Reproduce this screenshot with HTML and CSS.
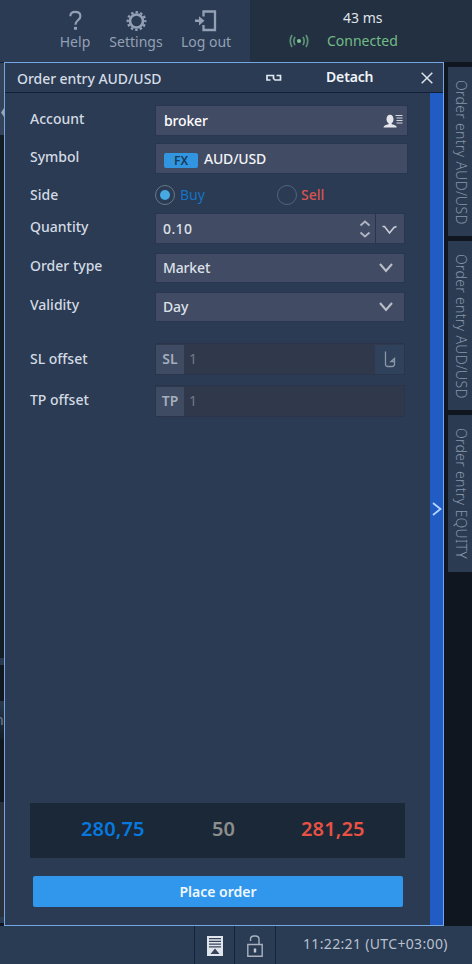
FILE: index.html
```html
<!DOCTYPE html>
<html lang="en">
<head>
<meta charset="utf-8">
<title>Order entry AUD/USD</title>
<link rel="stylesheet" href="styles.css">
</head>
<body>
<header class="topbar">
  <nav class="menu">
    <a class="menu-item help"><svg width="16" height="22" viewBox="0 0 16 22"><path d="M2.500 5.800C2.500 2.600 4.600 1.300 7.600 1.300s5.600 1.500 5.600 4.500c0 4.500-5.300 4.400-5.300 9.200" fill="none" stroke="currentColor" stroke-width="2.300"/><rect x="6.400" y="17.300" width="3.200" height="3" fill="currentColor"/></svg><span>Help</span></a>
    <a class="menu-item settings"><svg width="22" height="22" viewBox="-11 -11 22 22"><circle r="6.800" fill="none" stroke="currentColor" stroke-width="2.800"/><circle r="9.200" fill="none" stroke="currentColor" stroke-width="2.400" stroke-dasharray="2.600 2.217" stroke-dashoffset="1.300"/></svg><span>Settings</span></a>
    <a class="menu-item logout"><svg width="22" height="22" viewBox="0 0 22 22"><path d="M8.500 6.500V1.500H20V20H8.500V15" fill="none" stroke="currentColor" stroke-width="2.300"/><path d="M0 9.600h4V6.200l5.500 4.600L4 15.400V12H0z" fill="currentColor"/></svg><span>Log out</span></a>
  </nav>
  <div class="status">
    <div class="ping">43 ms</div>
    <div class="link"><svg width="20" height="14" viewBox="-10 -7 20 14"><circle r="2" fill="#80c595"/><path d="M-4-4.200Q-6.300 0-4 4.200M4-4.200Q6.300 0 4 4.200M-7-6Q-10.500 0-7 6M7-6Q10.500 0 7 6" fill="none" stroke="#5c9275" stroke-width="1.700"/></svg><span>Connected</span></div>
  </div>
</header>
<main class="workspace">
  <aside class="edge"><i class="e1"><svg width="4" height="12" viewBox="0 0 4 12"><path d="M4 0L1 4.500 4 9z" fill="#98a5b7"/></svg></i><i class="e2"></i><i class="e3"></i><i class="e4"></i><i class="e5">n</i><i class="e6"></i><i class="e7"></i><i class="e8"></i></aside>
  <section class="panel">
    <div class="panel-head">
      <h1>Order entry AUD/USD</h1>
      <svg class="chain" width="16" height="8" viewBox="0 0 16 8"><path d="M4.500 6H1V1.500H7.500V4.500L9 6H14.500V1.500H10.500" fill="none" stroke="#e2e8ef" stroke-width="1.700"/></svg>
      <span class="detach">Detach</span>
      <svg class="close" width="12" height="12" viewBox="0 0 12 12"><path d="M.7.700l10.600 10.600M11.300.700L.7 11.300" stroke="#dce3ec" stroke-width="1.500"/></svg>
    </div>
    <div class="panel-body">
      <div class="content">
        <form class="form">
          <div class="row account"><label>Account</label><div class="field wide"><span class="value strong">broker</span><svg width="20" height="14" viewBox="0 0 20 14"><path d="M.5 13.500c0-2 2-2.400 5-3.300V9A4 4 0 0 1 3.500 5.500C3.500 2.500 4.800.700 7 .700s3.500 1.800 3.500 4.800A4 4 0 0 1 8.700 9v1.200c3 .9 5 1.300 5 3.300z" fill="#e4e6eb"/><path d="M12.500 1.500h7M13.500 4h6M13.500 6.500h6M13.500 9h6" stroke="#d4d7df" stroke-width="1.200"/></svg></div></div>
          <div class="row symbol"><label>Symbol</label><div class="field wide"><span class="fx">FX</span><span class="pair">AUD/USD</span></div></div>
          <div class="row side"><label>Side</label><div class="choices"><span class="choice buy"><i class="radio on"></i><span>Buy</span></span><span class="choice sell"><i class="radio"></i><span>Sell</span></span></div></div>
          <div class="row quantity"><label>Quantity</label><div class="field"><span class="value">0.10</span><svg class="spin" width="12" height="18" viewBox="0 0 12 18"><path d="M1.500 5.500L6 1.500l4.500 4M1.500 12.500L6 16.500l4.500-4" fill="none" stroke="#aeb4c2" stroke-width="1.900"/></svg><span class="drop"><svg width="15" height="10" viewBox="0 0 15 10"><path d="M.5 1.500H2.500L7.500 8 12 2.500 14.500 1.500" fill="none" stroke="#c9cdd6" stroke-width="1.600"/></svg></span></div></div>
          <div class="row type"><label>Order type</label><div class="field select"><span class="value">Market</span><svg width="16" height="10" viewBox="0 0 16 10"><path d="M2 1l6 7 6-7" fill="none" stroke="#b9bec9" stroke-width="2.100"/></svg></div></div>
          <div class="row validity"><label>Validity</label><div class="field select"><span class="value">Day</span><svg width="16" height="10" viewBox="0 0 16 10"><path d="M2 1l6 7 6-7" fill="none" stroke="#b9bec9" stroke-width="2.100"/></svg></div></div>
          <div class="row sl"><label>SL offset</label><div class="field disabled"><b>SL</b><span class="num">1</span><span class="hook"><svg width="12" height="17" viewBox="0 0 12 17"><path d="M1.500.500V13Q1.500 15.500 4 15.500H8Q10.500 15.500 10.500 13V7.500L7 10.500H10.500" fill="none" stroke="#8b97a5" stroke-width="1.300"/></svg></span></div></div>
          <div class="row tp"><label>TP offset</label><div class="field disabled"><b>TP</b><span class="num">1</span></div></div>
        </form>
        <div class="quotes"><span class="bid">280,75</span><span class="spread">50</span><span class="ask">281,25</span></div>
        <button class="place">Place order</button>
      </div>
      <div class="handle"><svg width="10" height="14" viewBox="0 0 10 14"><path d="M1 1l7.500 6L1 13" fill="none" stroke="#b5d5ff" stroke-width="1.800"/></svg></div>
    </div>
  </section>
  <aside class="tabs">
    <div class="tab"><span>Order entry AUD/USD</span></div>
    <div class="tab"><span>Order entry AUD/USD</span></div>
    <div class="tab short"><span>Order entry EQUITY</span></div>
  </aside>
</main>
<footer class="bottombar">
  <div class="spacer"></div>
  <div class="cell news"><svg width="16" height="20" viewBox="0 0 16 20"><path d="M0 0h16v20H0z" fill="#e0e4eb"/><path d="M2 2.700h12M2 5.400h12M2 8.100h12M2 10.800h12" stroke="#35445b" stroke-width="1.300"/><path d="M8 12.500l4.500 5.500h-9z" fill="#35445b"/></svg></div>
  <div class="cell lock"><svg width="16" height="22" viewBox="0 0 16 22"><path d="M.8 9.500h14.400v11.700H.800zM3.500 6V4.500Q3.500 1 7 1h1.500Q12 1 12 4.500v5" fill="none" stroke="#a9b1bf" stroke-width="1.400"/><path d="M6.800 13.500h2.400v4H6.800z" fill="#c4cad4"/></svg></div>
  <div class="cell clock"><span>11:22:21 (UTC+03:00)</span></div>
</footer>
</body>
</html>
```
FILE: styles.css
```css
* { box-sizing: border-box; }
body {
  margin: 0;
  width: 472px;
  height: 964px;
  overflow: hidden;
  display: flex;
  flex-direction: column;
  background: #0f161f;
  color: #d5dce6;
  font: 14px/20px "Noto Sans", "Open Sans", sans-serif;
  white-space: nowrap;
}
svg { display: block; flex: none; }

.topbar { display: flex; height: 62px; flex: none; background: #2b3b54; }
.menu { width: 250px; display: flex; padding: 10px 0 0 50px; color: #94a1b5; }
.menu-item { display: flex; flex-direction: column; align-items: center; }
.menu-item svg { height: 22px; }
.menu-item.help { width: 50px; }
.menu-item.settings { width: 72px; }
.menu-item.logout { width: 68px; }
.menu-item.help svg { width: 15px; }
.menu-item.settings svg { width: 21px; }
.status { flex: 1; background: #223042; }
.ping { margin: 8px 0 0 93px; color: #e0e5ea; }
.link { display: flex; align-items: center; height: 20px; margin: 3px 0 0 39px; gap: 18px; color: #72bd84; }

.workspace { display: flex; height: 864px; flex: none; }
.edge { width: 4px; overflow: hidden; display: flex; flex-direction: column; }
.edge i { flex: none; display: block; font-style: normal; color: #718094; }
.e1 { height: 73px; background: #35435a; padding-top: 45px; border-top: 1px solid #121d2c; }
.e2 { height: 523px; background: #141c24; }
.e3 { height: 7px; background: #2b394e; }
.e4 { height: 36px; background: #111820; }
.e5 { height: 38px; background: linear-gradient(#2b3a50, #151e28); padding-top: 9px; text-indent: -5px; }
.e6 { height: 63px; background: #111820; }
.e7 { height: 115px; background: #292f3b; }
.e8 { height: 6px; background: #2b3b54; }

.panel { width: 440px; border: 1px solid #73a6e2; display: flex; flex-direction: column; background: #2a3b53; }
.panel-head { height: 30px; display: flex; align-items: center; border-bottom: 1px solid #10203a; padding-left: 12px; }
h1 { margin: 2px 0 0; width: 249px; font-size: 14px; font-weight: 500; letter-spacing: -.05px; }
.chain { margin-top: 0; }
.detach { margin: -2px 0 0 44px; width: 95px; color: #f0f4f8; font-weight: 600; letter-spacing: -.15px; }
.panel-body { flex: 1; display: flex; }
.content { width: 425px; display: flex; flex-direction: column; padding: 12px 0 0 25px; }
.handle { width: 13px; background: #215cc4; display: flex; align-items: center; padding-left: 2px; }

.form { height: 698px; color: #d3dae3; }
.row { display: grid; grid-template-columns: 125px auto; justify-content: start; align-items: start; }
.row label { padding-top: 4px; font-weight: 500; }
.account { height: 38px; }
.symbol { height: 40px; }
.side { height: 30px; }
.quantity { height: 40px; }
.type { height: 39px; }
.validity { height: 51px; }
.sl { height: 42px; }
.row.side label { padding-top: 2px; }
.row.type label, .row.validity label { padding-top: 3px; }
.row.sl label { padding-top: 6px; }
.row.tp label { padding-top: 5px; }
.field {
  width: 250px;
  height: 31px;
  border: 1px solid #293651;
  background: #424b64;
  display: flex;
  align-items: center;
  padding-left: 7px;
}
.field.wide { width: 253px; padding-left: 8px; }
.field.select { height: 30px; padding-right: 10px; }
.value { flex: 1; font-weight: 500; color: #dce1e9; letter-spacing: -.15px; }
.quantity .value { letter-spacing: .4px; }
.value.strong { color: #fff; }
.account svg { margin-right: 4px; }
.fx {
  width: 34px;
  height: 15px;
  margin-top: 3px;
  border-radius: 2px;
  background: #3195df;
  color: #173b5c;
  font-size: 12px;
  font-weight: 600;
  line-height: 16px;
  text-align: center;
}
.pair { margin-left: 6px; color: #f1f3f6; font-weight: 500; letter-spacing: -.2px; }
.choices { display: flex; padding-top: 2px; }
.choice { display: flex; align-items: center; gap: 5px; width: 122px; height: 20px; }
.buy { color: #1672c4; }
.sell { color: #da5450; }
.sell { gap: 4px; font-weight: 500; }
.radio { width: 20px; height: 20px; flex: none; border: 1px solid #526481; border-radius: 50%; display: flex; align-items: center; justify-content: center; }
.radio.on { border-color: #6b7789; }
.radio.on::before { content: ""; width: 10px; height: 10px; border-radius: 50%; background: #46a9e2; }
.drop { width: 29px; height: 29px; margin-left: 4px; border-left: 1px solid #29354e; display: flex; align-items: center; padding: 3px 0 0 6px; }
.disabled { background: #30384b; padding: 0; height: 32px; color: #727987; border-color: #2a344a; }
.disabled b { width: 28px; height: 29px; background: #3f4a63; color: #a5aebd; font-weight: 600; text-align: center; line-height: 28px; }
.num { flex: 1; padding-left: 5px; }
.hook { width: 29px; height: 29px; background: #30415b; display: flex; align-items: center; justify-content: center; }

.quotes { width: 375px; height: 55px; background: #1a2837; display: flex; align-items: center; font-size: 20px; font-weight: 600; letter-spacing: .15px; padding-bottom: 3px; }
.bid { width: 152px; padding-left: 51px; color: #0878df; }
.spread { width: 86px; padding-left: 30px; color: #8c8d8d; }
.ask { padding-left: 33px; color: #e95143; }
.place {
  margin: 18px 0 0 3px;
  width: 370px;
  height: 31px;
  border: 0;
  border-radius: 2px;
  background: #3097ed;
  color: #f0f8ff;
  font: inherit;
  font-weight: 600;
}

.tabs { width: 24px; margin-left: 4px; padding-top: 5px; display: flex; flex-direction: column; gap: 5px; }
.tab { height: 169px; background: #2b3b52; display: flex; padding: 13px 0 0 2px; color: #8796a9; font-weight: 300; line-height: 22px; letter-spacing: .3px; }
.tab.short { height: 157px; }
.tab span { writing-mode: vertical-rl; }

.bottombar { display: flex; height: 38px; background: #2a3b54; color: #b9c1cd; }
.spacer { width: 194px; }
.cell { border-left: 1px solid #14233a; display: flex; align-items: center; }
.news { width: 40px; padding: 2px 0 0 12px; }
.lock { width: 41px; padding: 2px 0 0 12px; }
.clock { flex: 1; padding: 0 0 2px 27px; letter-spacing: .34px; }
```
